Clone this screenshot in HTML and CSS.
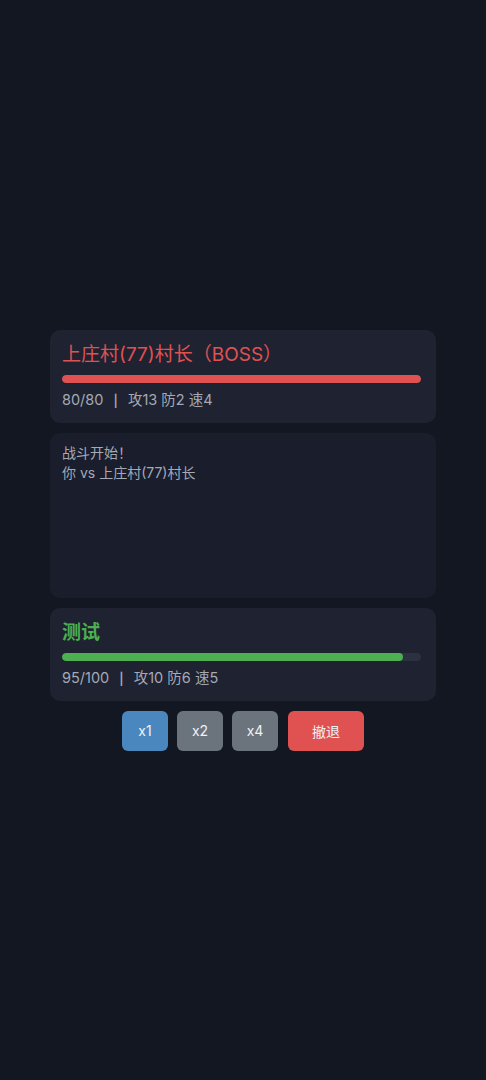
FILE: index.html
```html
<!DOCTYPE html>
<html lang="zh">
<head>
    <meta charset="UTF-8">
    <meta name="viewport" content="width=device-width, initial-scale=1.0">
    <title>战斗</title>
    <link rel="stylesheet" href="styles.css">
</head>
<body>
    <main class="battle">
        <div class="unit enemy">
            <div class="unit-name">上庄村(77)村长（BOSS）</div>
            <div class="hp-bar"><div class="hp-fill" style="width: 100%"></div></div>
            <div class="unit-stats">80/80 <span class="sep">|</span> 攻13 防2 速4</div>
        </div>

        <div class="log">
            <div>战斗开始！</div>
            <div>你 vs 上庄村(77)村长</div>
        </div>

        <div class="unit player">
            <div class="unit-name">测试</div>
            <div class="hp-bar"><div class="hp-fill" style="width: 95%"></div></div>
            <div class="unit-stats">95/100 <span class="sep">|</span> 攻10 防6 速5</div>
        </div>

        <div class="controls">
            <button class="btn speed active">x1</button>
            <button class="btn speed">x2</button>
            <button class="btn speed">x4</button>
            <button class="btn retreat">撤退</button>
        </div>
    </main>
</body>
</html>
```

FILE: styles.css
```css
:root {
    --bg: #131722;
    --card: #1e2231;
    --text: #c3c7d2;
    --muted: #a4a9b6;
    --red: #e05252;
    --green: #4caf50;
    --blue: #4a87bf;
    --gray: #6b737d;
}

* {
    margin: 0;
    padding: 0;
    box-sizing: border-box;
    font-family: Inter, "Noto Sans CJK SC", sans-serif;
}

body {
    background: var(--bg);
    color: var(--text);
    min-height: 100vh;
    display: flex;
    align-items: center;
    justify-content: center;
}

.battle {
    width: 386px;
    display: flex;
    flex-direction: column;
    gap: 10px;
}

.unit {
    background: var(--card);
    border-radius: 10px;
    padding: 13px 15px 12px 12px;
}

.unit-name {
    font-size: 19px;
    line-height: 24px;
    margin-bottom: 8px;
}

.enemy .unit-name {
    color: var(--red);
}

.player .unit-name {
    color: var(--green);
    font-weight: 600;
}

.hp-bar {
    height: 8px;
    background: #2c3142;
    border-radius: 4px;
    overflow: hidden;
}

.hp-fill {
    height: 100%;
    border-radius: 4px;
}

.enemy .hp-fill {
    background: var(--red);
}

.player .hp-fill {
    background: var(--green);
}

.unit-stats {
    margin-top: 7px;
    font-size: 14.5px;
    line-height: 20px;
    color: var(--muted);
}

.sep {
    display: inline-block;
    margin: 0 6px;
    font-size: 12px;
    font-weight: 600;
}

.log {
    background: #1a1d2b;
    border-radius: 10px;
    height: 165px;
    padding: 10px 12px;
    font-size: 14px;
    line-height: 20px;
    color: var(--muted);
}

.controls {
    display: flex;
    justify-content: center;
    gap: 9px;
}

.btn {
    border: none;
    height: 40px;
    width: 46px;
    border-radius: 6px;
    font-size: 14px;
    color: #eef1f5;
    cursor: pointer;
}

.speed {
    background: var(--gray);
}

.speed.active {
    background: var(--blue);
}

.retreat {
    background: var(--red);
    width: 76px;
    margin-left: 1px;
}
```
